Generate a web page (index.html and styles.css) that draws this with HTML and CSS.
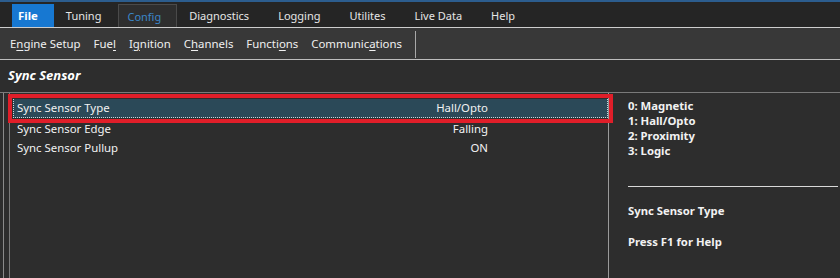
FILE: index.html
```html
<!DOCTYPE html>
<html lang="en">
<head>
<meta charset="UTF-8" />
<title>Sync Sensor</title>
<link rel="stylesheet" href="styles.css">
</head>
<body>

<div class="topline"></div>

<nav class="menubar">
  <span class="tab file">File</span>
  <span class="tab">Tuning</span>
  <span class="tab active">Config</span>
  <span class="tab">Diagnostics</span>
  <span class="tab">Logging</span>
  <span class="tab">Utilites</span>
  <span class="tab">Live Data</span>
  <span class="tab">Help</span>
</nav>

<div class="toolbar">
  <span class="tool">E<u>n</u>gine Setup</span>
  <span class="tool">Fue<u>l</u></span>
  <span class="tool">I<u>g</u>nition</span>
  <span class="tool">C<u>h</u>annels</span>
  <span class="tool">Functi<u>o</u>ns</span>
  <span class="tool">Communic<u>a</u>tions</span>
  <span class="sep"></span>
</div>

<h1 class="title">Sync Sensor</h1>

<section class="panel">
  <div class="list">
    <div class="row selected">
      <span class="name">Sync Sensor Type</span>
      <span class="value">Hall/Opto</span>
    </div>
    <div class="row">
      <span class="name">Sync Sensor Edge</span>
      <span class="value">Falling</span>
    </div>
    <div class="row">
      <span class="name">Sync Sensor Pullup</span>
      <span class="value">ON</span>
    </div>
  </div>

  <aside class="help">
    <div class="options">
      <p>0: Magnetic</p>
      <p>1: Hall/Opto</p>
      <p>2: Proximity</p>
      <p>3: Logic</p>
    </div>
    <hr />
    <p class="help-title">Sync Sensor Type</p>
    <p class="help-title">Press F1 for Help</p>
  </aside>
</section>

</body>
</html>
```

FILE: styles.css
```css
body {
  margin: 0;
  background: #2d2d2d;
  color: #f2f2f2;
  font-family: "Noto Sans", "Open Sans", sans-serif;
  font-size: 11.4px;
  overflow: hidden;
}
.topline {
  height: 2px;
  background: #2c5d8e;
}
.menubar {
  display: flex;
  align-items: stretch;
  height: 25px;
  padding-left: 12px;
  background: #252525;
  border-bottom: 1px solid #cdcdcd;
  font-size: 11px;
}
.tab {
  display: flex;
  align-items: center;
  margin-top: 2px;
  padding: 0 17px 0 12px;
  color: #e6e6e6;
}
.tab.file {
  background: #1778d2;
  color: #fff;
  font-weight: bold;
  font-size: 11.4px;
  padding: 0 16px 0 6px;
}
.tab.active {
  padding: 0 15px 0 8px;
  background: #2e2e2e;
  color: #3b86c8;
  border: 1px solid #4a4a4a;
  border-bottom: none;
}
.toolbar {
  display: flex;
  align-items: center;
  gap: 13px;
  height: 31px;
  padding-left: 10px;
  background: #383838;
  border-bottom: 1px solid #bdbdbd;
}
.tool {
  color: #f0f0f0;
}
.tool u {
  text-underline-offset: 2px;
}
.sep {
  width: 1px;
  height: 27px;
  margin-top: 2px;
  background: #a8a8a8;
}
.title {
  margin: 0;
  padding: 6px 8px 0;
  height: 26px;
  font-size: 13px;
  font-style: italic;
  font-weight: bold;
  color: #fff;
}
.panel {
  display: flex;
  height: 186px;
  border-top: 1px solid #7a7a7a;
}
.list {
  width: 595px;
  margin-left: 3px;
  padding: 6px 0 0 9px;
  border-left: 1px solid #8a8a8a;
  border-right: 1px solid #9a9a9a;
  box-shadow: inset 5px 0 0 #2d2d2d, inset 6px 0 0 #7a7a7a;
}
.row {
  display: flex;
  justify-content: space-between;
  height: 19px;
  line-height: 19px;
  padding: 0 120px 0 4px;
}
.row.selected {
  height: 18px;
  line-height: 18px;
  margin-bottom: 1px;
  padding: 0 119px 0 3px;
  background: #2b4958;
  border: 1px dotted #c8d6dc;
  border-top: none;
  outline: 4px solid #e01e29;
  outline-offset: 1px;
}
.help {
  flex: 1;
  padding: 5px 2px 0 19px;
  font-size: 11.3px;
  font-weight: bold;
}
.options p {
  margin: 0;
  line-height: 15px;
}
.help hr {
  margin: 28px 0 0;
  border: none;
  border-top: 1px solid #d8d8d8;
}
.help-title {
  margin: 16px 0 0;
  line-height: 15px;
}
```
